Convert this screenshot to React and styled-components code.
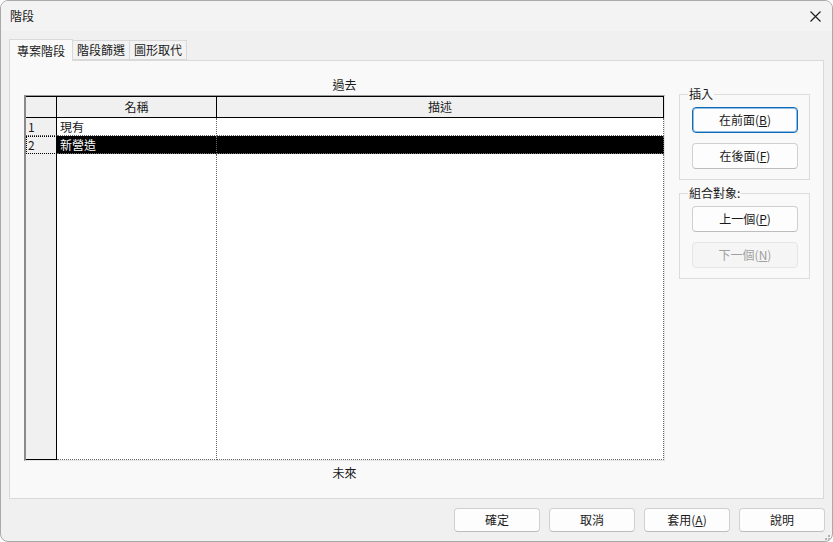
import styled, { createGlobalStyle } from 'styled-components'

const GlobalStyle = createGlobalStyle`
  html, body {
    margin: 0;
    padding: 0;
    background: #ffffff;
  }
  body {
    font-family: "Noto Sans CJK TC", "Noto Sans", sans-serif;
    font-size: 12px;
    color: #1a1a1a;
  }
`

const Window = styled.div`
  width: 833px;
  height: 542px;
  box-sizing: border-box;
  border: 1px solid #a9a9a9;
  border-radius: 8px;
  overflow: hidden;
  display: flex;
  flex-direction: column;
  background: #f0f0f0;
`

const TitleBar = styled.div`
  height: 30px;
  flex: none;
  display: flex;
  align-items: center;
  justify-content: space-between;
  padding: 0 9px 0 9px;
  background: #f3f3f3;
`

const Title = styled.span`
  font-size: 12px;
  line-height: 16px;
`

const CloseButton = styled.div`
  width: 16px;
  height: 16px;
  display: flex;
  align-items: center;
  justify-content: center;
`

const Body = styled.div`
  flex: 1;
  display: flex;
  flex-direction: column;
  padding: 8px 8px 0 8px;
  min-height: 0;
`

const TabStrip = styled.div`
  display: flex;
  align-items: flex-end;
  height: 22px;
  margin-bottom: -1px;
  position: relative;
  z-index: 1;
`

const Tab = styled.div`
  box-sizing: border-box;
  height: ${(p) => (p.$active ? '22px' : '20px')};
  margin-bottom: ${(p) => (p.$active ? '0' : '1px')};
  padding: 0 ${(p) => (p.$active ? '7px' : '4px')};
  display: flex;
  align-items: center;
  border: 1px solid #d9d9d9;
  border-left: ${(p) => (p.$first ? '1px solid #d9d9d9' : p.$active ? '1px solid #d9d9d9' : 'none')};
  border-bottom: ${(p) => (p.$active ? 'none' : '1px solid #d9d9d9')};
  background: ${(p) => (p.$active ? '#f9f9f9' : '#f3f3f3')};
  color: #1a1a1a;
  line-height: 16px;
  position: relative;
  z-index: ${(p) => (p.$active ? 2 : 1)};
`

const Panel = styled.div`
  flex: 1;
  box-sizing: border-box;
  border: 1px solid #d9d9d9;
  background: #f9f9f9;
  display: flex;
  padding: 14px 13px 13px 14px;
  gap: 14px;
  min-height: 0;
`

const LeftColumn = styled.div`
  width: 641px;
  display: flex;
  flex-direction: column;
`

const TimeLabel = styled.div`
  height: ${(p) => p.$h}px;
  display: flex;
  align-items: center;
  justify-content: center;
  line-height: 16px;
`

const GridBox = styled.div`
  flex: 1;
  box-sizing: border-box;
  border-top: 1px solid #9a9a9a;
  border-left: 2px solid #8a8a8a;
  border-right: 1px solid #e4e4e4;
  border-bottom: 1px solid #e4e4e4;
  display: grid;
  grid-template-columns: 31px 160px 1fr;
  grid-template-rows: 22px 18px 18px 1fr;
  background: #ffffff;
`

const HeaderCell = styled.div`
  box-sizing: border-box;
  background: #f0f0f0;
  border-top: 1px solid #000;
  border-bottom: 1px solid #000;
  border-right: 1px solid #000;
  display: flex;
  align-items: center;
  justify-content: center;
  line-height: 16px;
`

const NumCell = styled.div`
  box-sizing: border-box;
  background: #f0f0f0;
  border-right: 1px solid #000;
  border-bottom: ${(p) => (p.$filler ? '1px solid #000' : '1px dotted #555')};
  outline: ${(p) => (p.$focus ? '1px dotted #000' : 'none')};
  outline-offset: -1px;
  padding-left: 2px;
  display: flex;
  align-items: center;
  line-height: 16px;
`

const DataCell = styled.div`
  box-sizing: border-box;
  background: ${(p) => (p.$selected ? '#000' : '#fff')};
  color: ${(p) => (p.$selected ? '#fff' : '#1a1a1a')};
  border-right: 1px dotted #666;
  border-bottom: 1px dotted #666;
  padding-left: 3px;
  display: flex;
  align-items: center;
  line-height: 16px;
`

const RightColumn = styled.div`
  width: 131px;
  display: flex;
  flex-direction: column;
  gap: 5px;
  padding-top: 11px;
`

const Group = styled.fieldset`
  margin: 0;
  padding: 5px 11px 10px 12px;
  border: 1px solid #dcdcdc;
  display: flex;
  flex-direction: column;
  gap: 10px;
  min-width: 0;
`

const Legend = styled.legend`
  padding: 0 1px;
  margin-left: -4px;
  line-height: 16px;
  font-size: 12px;
`

const Button = styled.button`
  box-sizing: border-box;
  width: ${(p) => p.$w}px;
  height: ${(p) => p.$h}px;
  font-family: "Noto Sans CJK TC", "Noto Sans", sans-serif;
  font-size: 12px;
  line-height: 16px;
  padding: 0;
  border-radius: 4px;
  background: ${(p) => (p.disabled ? '#f5f5f5' : '#fdfdfd')};
  color: ${(p) => (p.disabled ? '#a0a0a0' : '#1a1a1a')};
  border: 1px solid ${(p) => (p.$focused ? '#0f6cbd' : p.disabled ? '#e5e5e5' : '#d0d0d0')};
  border-bottom-color: ${(p) => (p.$focused ? '#0f6cbd' : p.disabled ? '#e5e5e5' : '#bdbdbd')};
  box-shadow: ${(p) => (p.$focused ? 'inset 0 0 0 1px rgba(15,108,189,0.45)' : 'none')};
  display: flex;
  align-items: center;
  justify-content: center;
  u {
    text-decoration: underline;
    text-underline-offset: 1px;
  }
`

const Footer = styled.div`
  height: 42px;
  flex: none;
  display: flex;
  justify-content: flex-end;
  align-items: flex-start;
  padding: 9px 7px 0 0;
  gap: 9px;
  box-sizing: border-box;
  position: relative;
`

const Grip = styled.div`
  position: absolute;
  right: 1px;
  bottom: 1px;
  width: 10px;
  height: 10px;
`

const rows = [
  { n: '1', name: '現有' },
  { n: '2', name: '新營造', selected: true },
]

function Mnemonic({ label, k }) {
  return (
    <span>
      {label}(<u>{k}</u>)
    </span>
  )
}

export default function App() {
  return (
    <>
      <GlobalStyle />
      <Window>
        <TitleBar>
          <Title>階段</Title>
          <CloseButton>
            <svg width="11" height="11" viewBox="0 0 11 11">
              <path d="M0.5 0.5 L10.5 10.5 M10.5 0.5 L0.5 10.5" stroke="#1a1a1a" strokeWidth="1.1" fill="none" />
            </svg>
          </CloseButton>
        </TitleBar>
        <Body>
          <TabStrip>
            <Tab $active $first>專案階段</Tab>
            <Tab>階段篩選</Tab>
            <Tab>圖形取代</Tab>
          </TabStrip>
          <Panel>
            <LeftColumn>
              <TimeLabel $h={20}>過去</TimeLabel>
              <GridBox>
                <HeaderCell />
                <HeaderCell>名稱</HeaderCell>
                <HeaderCell>描述</HeaderCell>
                {rows.map((r) => [
                  <NumCell key={r.n + 'n'} $focus={r.selected}>{r.n}</NumCell>,
                  <DataCell key={r.n + 'a'} $selected={r.selected}>{r.name}</DataCell>,
                  <DataCell key={r.n + 'b'} $selected={r.selected} />,
                ])}
                <NumCell $filler />
                <DataCell />
                <DataCell />
              </GridBox>
              <TimeLabel $h={24}>未來</TimeLabel>
            </LeftColumn>
            <RightColumn>
              <Group>
                <Legend>插入</Legend>
                <Button $w={106} $h={26} $focused>
                  <Mnemonic label="在前面" k="B" />
                </Button>
                <Button $w={106} $h={26}>
                  <Mnemonic label="在後面" k="F" />
                </Button>
              </Group>
              <Group>
                <Legend>組合對象:</Legend>
                <Button $w={106} $h={26}>
                  <Mnemonic label="上一個" k="P" />
                </Button>
                <Button $w={106} $h={26} disabled>
                  <Mnemonic label="下一個" k="N" />
                </Button>
              </Group>
            </RightColumn>
          </Panel>
        </Body>
        <Footer>
          <Button $w={86} $h={24}>確定</Button>
          <Button $w={86} $h={24}>取消</Button>
          <Button $w={86} $h={24}>
            <Mnemonic label="套用" k="A" />
          </Button>
          <Button $w={86} $h={24}>說明</Button>
          <Grip>
            <svg width="10" height="10" viewBox="0 0 10 10">
              <rect x="7" y="1" width="2" height="2" fill="#b5b5b5" />
              <rect x="4" y="4" width="2" height="2" fill="#b5b5b5" />
              <rect x="7" y="4" width="2" height="2" fill="#b5b5b5" />
              <rect x="1" y="7" width="2" height="2" fill="#b5b5b5" />
              <rect x="4" y="7" width="2" height="2" fill="#b5b5b5" />
              <rect x="7" y="7" width="2" height="2" fill="#b5b5b5" />
            </svg>
          </Grip>
        </Footer>
      </Window>
    </>
  )
}
